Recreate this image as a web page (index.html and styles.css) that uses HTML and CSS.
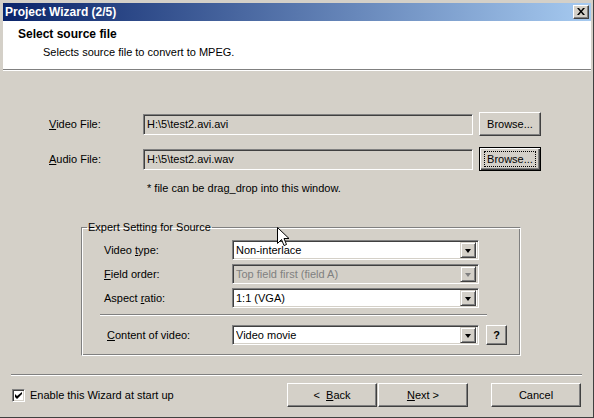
FILE: index.html
```html
<!DOCTYPE html>
<html>
<head>
<meta charset="utf-8">
<link rel="stylesheet" href="styles.css">
</head>
<body>
<div class="window">
  <div class="titlebar">
    <span class="title">Project Wizard (2/5)</span>
    <span class="close-btn">
      <svg width="8" height="7" viewBox="0 0 8 7"><path d="M0 0h2l2 2.5L6 0h2L5 3.5 8 7H6L4 4.5 2 7H0l3-3.5z" fill="#000"/></svg>
    </span>
  </div>
  <div class="header">
    <div class="h-title">Select source file</div>
    <div class="h-sub">Selects source file to convert to MPEG.</div>
  </div>
  <div class="hsep"></div>
  <div class="content">
    <div class="files">
      <label class="flabel"><u>V</u>ideo File:</label>
      <div class="textbox">H:\5\test2.avi.avi</div>
      <div class="btn browse">Browse...</div>
      <label class="flabel"><u>A</u>udio File:</label>
      <div class="textbox">H:\5\test2.avi.wav</div>
      <div class="btn browse focused"><span class="focus-rect">Browse...</span></div>
    </div>
    <div class="note">* file can be drag_drop into this window.</div>
    <fieldset class="group">
      <legend>Expert Setting for Source</legend>
      <div class="grid">
        <span class="glabel">Video <u>t</u>ype:</span>
        <div class="combo"><span class="ctext">Non-interlace</span><span class="dropbtn"><i class="tri"></i></span></div>
        <span class="glabel"><u>F</u>ield order:</span>
        <div class="combo disabled"><span class="ctext">Top field first (field A)</span><span class="dropbtn"><i class="tri"></i></span></div>
        <span class="glabel">Aspect <u>r</u>atio:</span>
        <div class="combo"><span class="ctext">1:1 (VGA)</span><span class="dropbtn"><i class="tri"></i></span></div>
      </div>
      <div class="gsep"></div>
      <div class="crow">
        <span class="glabel clabel"><u>C</u>ontent of video:</span>
        <div class="combo"><span class="ctext">Video movie</span><span class="dropbtn"><i class="tri"></i></span></div>
        <div class="btn help">?</div>
      </div>
    </fieldset>
    <div class="fsep"></div>
    <div class="footer">
      <div class="check">
        <span class="cbox"><svg width="7" height="7" viewBox="0 0 7 7"><path d="M0 2v3l2 2 5-5V0L2 4z" fill="#000"/></svg></span>
        <span>Enable this Wizard at start up</span>
      </div>
      <div class="navbtns">
        <div class="btn nav"><span>&lt;&nbsp; <u>B</u>ack</span></div>
        <div class="btn nav"><span><u>N</u>ext &gt;</span></div>
      </div>
      <div class="btn nav cancel">Cancel</div>
    </div>
  </div>
  <svg class="cursor" width="13" height="21" viewBox="0 0 13 21">
    <path d="M0.5 0.5 V16.5 L4.5 12.5 L7 18.5 L9.5 17.5 L7 11.5 H12 Z" fill="#fff" stroke="#000" stroke-width="1"/>
  </svg>
</div>
</body>
</html>
```
FILE: styles.css
```css
* { box-sizing: border-box; }
html, body { margin: 0; padding: 0; }
body {
  width: 594px;
  height: 418px;
  overflow: hidden;
  background: #d4d0c8;
  font-family: "Liberation Sans", Arial, sans-serif;
  font-size: 11px;
  color: #000;
}
.window {
  position: relative;
  width: 594px;
  height: 418px;
  background: #d4d0c8;
  padding: 3px 2px 0 3px;
  border-right: 1px solid #404040;
  border-bottom: 1px solid #404040;
  overflow: hidden;
}
.titlebar {
  height: 18px;
  background: linear-gradient(to right, #0a246a, #a6caf0);
  display: flex;
  align-items: center;
  justify-content: space-between;
  padding: 0 2px 0 2px;
}
.title {
  color: #fff;
  font-weight: bold;
  font-size: 12px;
  line-height: 18px;
}
.close-btn {
  width: 16px;
  height: 14px;
  background: #d4d0c8;
  border-top: 1px solid #fff;
  border-left: 1px solid #fff;
  border-right: 1px solid #404040;
  border-bottom: 1px solid #404040;
  box-shadow: inset -1px -1px 0 #808080;
  display: flex;
  align-items: center;
  justify-content: center;
  padding-right: 1px;
  padding-bottom: 1px;
}
.header {
  height: 48px;
  background: #fff;
  padding: 6px 0 0 15px;
}
.h-title {
  font-weight: bold;
  font-size: 12px;
  line-height: 14px;
}
.h-sub {
  margin-top: 5px;
  padding-left: 25px;
  line-height: 13px;
}
.hsep {
  height: 2px;
  border-top: 1px solid #808080;
  border-bottom: 1px solid #fff;
}
.content {
  display: flex;
  flex-direction: column;
}
.files {
  margin-top: 41px;
  padding-left: 46px;
  display: grid;
  grid-template-columns: 88px 330px 62px;
  grid-auto-rows: 24px;
  column-gap: 6px;
  row-gap: 11px;
  align-items: center;
}
.flabel { line-height: 13px; }
.textbox {
  height: 21px;
  background: #d4d0c8;
  border: 1px solid;
  border-color: #808080 #fff #fff #808080;
  box-shadow: inset 1px 1px 0 #404040, inset -1px -1px 0 #d4d0c8;
  padding: 0 3px;
  line-height: 19px;
  white-space: nowrap;
}
.btn {
  background: #d4d0c8;
  border: 1px solid;
  border-color: #fff #404040 #404040 #fff;
  box-shadow: inset -1px -1px 0 #808080;
  display: flex;
  align-items: center;
  justify-content: center;
}
.browse { height: 24px; }
.browse.focused {
  border: 1px solid #000;
  box-shadow: inset 1px 1px 0 #fff, inset -1px -1px 0 #404040, inset -2px -2px 0 #808080;
}
.focus-rect {
  display: flex;
  align-items: center;
  justify-content: center;
  width: 52px;
  height: 16px;
  border: 1px dotted #000;
}
.note {
  margin-top: 11px;
  margin-left: 144px;
  line-height: 13px;
}
.group {
  margin: 26px 0 0 78px;
  width: 440px;
  height: 135px;
  border: 1px solid;
  border-color: #808080 #fff #fff #808080;
  box-shadow: inset 1px 1px 0 #fff, inset -1px -1px 0 #808080;
  padding: 6px 0 0 22px;
  min-width: 0;
}
.group legend {
  padding: 0 1px;
  margin-left: -17px;
  line-height: 13px;
}
.grid {
  display: grid;
  grid-template-columns: 128px 247px;
  grid-auto-rows: 20px;
  row-gap: 4px;
  align-items: center;
}
.glabel { line-height: 13px; }
.combo {
  height: 20px;
  background: #fff;
  border: 1px solid;
  border-color: #808080 #fff #fff #808080;
  box-shadow: inset 1px 1px 0 #404040, inset -1px -1px 0 #d4d0c8;
  display: flex;
  align-items: center;
  padding: 2px 2px 2px 3px;
}
.ctext {
  flex: 1;
  white-space: nowrap;
  overflow: hidden;
  line-height: 16px;
}
.dropbtn {
  width: 16px;
  height: 16px;
  background: #d4d0c8;
  border: 1px solid;
  border-color: #d4d0c8 #404040 #404040 #d4d0c8;
  box-shadow: inset 1px 1px 0 #fff, inset -1px -1px 0 #808080;
  display: flex;
  align-items: center;
  justify-content: center;
}
.tri {
  width: 0;
  height: 0;
  border-left: 3.5px solid transparent;
  border-right: 3.5px solid transparent;
  border-top: 4px solid #000;
  margin-top: 1px;
}
.combo.disabled { background: #d4d0c8; }
.combo.disabled .ctext { color: #808080; }
.combo.disabled .tri { border-top-color: #808080; }
.gsep {
  margin: 6px 0 0 -4px;
  width: 387px;
  height: 2px;
  border-top: 1px solid #808080;
  border-bottom: 1px solid #fff;
}
.crow {
  margin-top: 9px;
  display: grid;
  grid-template-columns: 128px 247px 28px;
  align-items: center;
}
.clabel { padding-left: 3px; }
.help {
  height: 20px;
  width: 21px;
  margin-left: 7px;
  font-weight: bold;
  font-size: 11px;
}
.fsep {
  margin: 18px 0 0 8px;
  width: 571px;
  height: 2px;
  border-top: 1px solid #808080;
  border-bottom: 1px solid #fff;
}
.footer {
  margin-top: 7px;
  display: flex;
  align-items: center;
  height: 24px;
}
.check {
  display: flex;
  align-items: center;
  gap: 5px;
  margin-left: 9px;
  width: 275px;
}
.cbox {
  width: 13px;
  height: 13px;
  background: #fff;
  border: 1px solid;
  border-color: #808080 #fff #fff #808080;
  box-shadow: inset 1px 1px 0 #404040, inset -1px -1px 0 #d4d0c8;
  display: flex;
  align-items: center;
  justify-content: center;
}
.navbtns {
  display: flex;
  gap: 1px;
}
.nav {
  width: 90px;
  height: 24px;
}
.cancel { margin-left: 23px; }
.cursor {
  position: absolute;
  left: 277px;
  top: 227px;
}
```
